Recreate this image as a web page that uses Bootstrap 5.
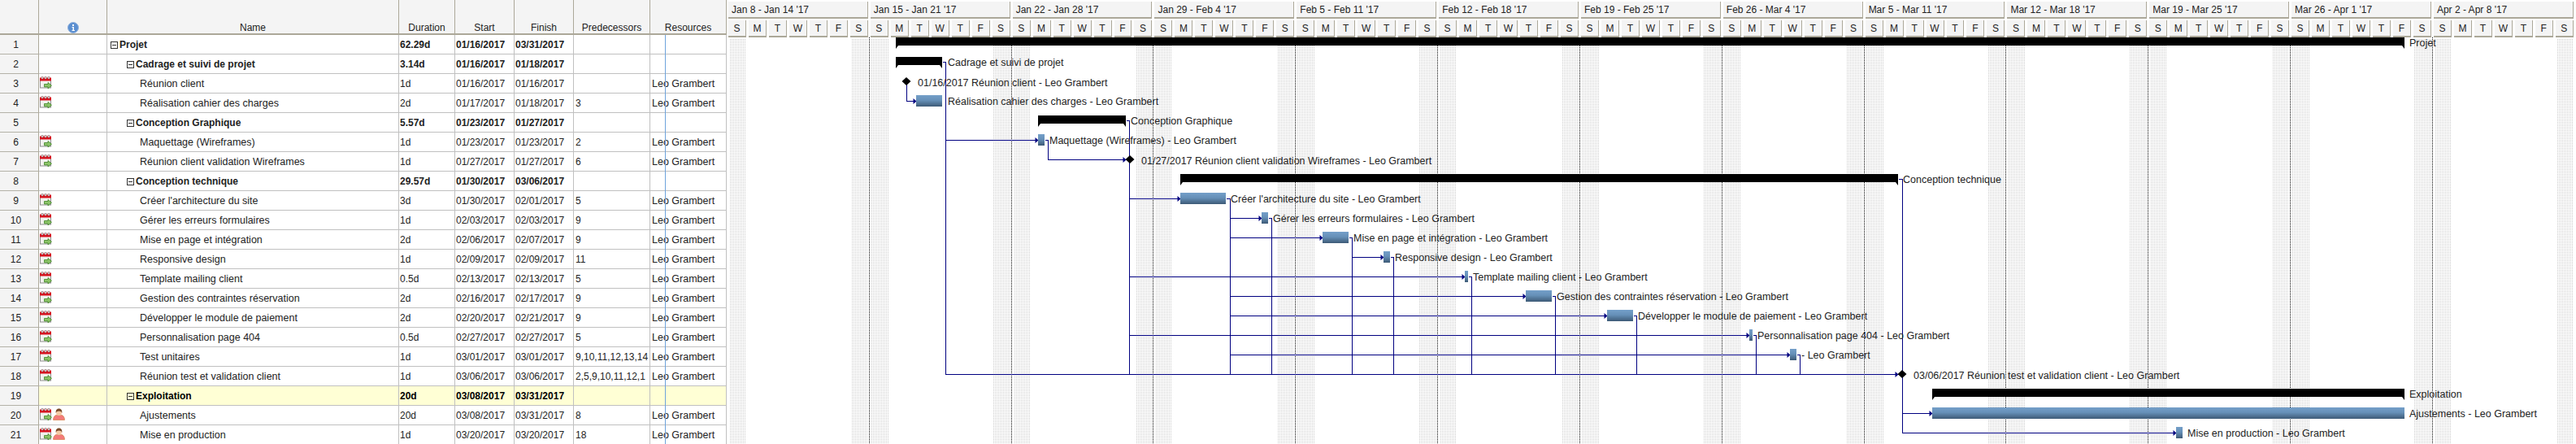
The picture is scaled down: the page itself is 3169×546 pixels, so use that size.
<!DOCTYPE html>
<html lang="fr">
<head>
    <meta charset="UTF-8">
    <meta name="viewport" content="width=device-width, initial-scale=1.0">
    <title>Projet - Gantt</title>
    <link href="https://cdn.jsdelivr.net/npm/bootstrap@5.3.0/dist/css/bootstrap.min.css" rel="stylesheet">
    <style>
        html, body {
            height: 546px;
            overflow: hidden;
            background: #fff;
        }

        body {
            font-family: "Liberation Sans", Arial, sans-serif;
            font-size: 12px;
            color: #222;
        }

        .plan-label {
            font-family: "Liberation Sans", Arial, sans-serif;
            font-size: 12.5px;
        }

        .plan-left {
            width: 894px;
            flex: none;
        }

        .plan-grid {
            width: 894px;
            table-layout: fixed;
            border-collapse: separate;
            border-spacing: 0;
            line-height: 14px;
        }

        .plan-grid col:nth-child(1) { width: 48px; }
        .plan-grid col:nth-child(2) { width: 84px; }
        .plan-grid col:nth-child(3) { width: 359px; }
        .plan-grid col:nth-child(4) { width: 69px; }
        .plan-grid col:nth-child(5) { width: 73px; }
        .plan-grid col:nth-child(6) { width: 73px; }
        .plan-grid col:nth-child(7) { width: 94px; }
        .plan-grid col:nth-child(8) { width: 94px; }

        .plan-grid th, .plan-grid td {
            padding: 0 1px;
            border: 0;
            white-space: nowrap;
            overflow: hidden;
            color: #222;
        }

        .plan-grid thead th {
            height: 43px;
            background: #f4f4f4;
            font-weight: 400;
            text-align: center;
            border-right: 1px solid #aca899;
            border-bottom: 2px solid #aca899;
        }

        .plan-grid tbody th, .plan-grid tbody td {
            height: 24px;
            border-right: 1px solid #c0c0c0;
            border-bottom: 1px solid #c0c0c0;
        }

        .plan-grid tbody th {
            background: #f4f4f4;
            font-weight: 400;
            text-align: center;
            padding-right: 9px;
            border-right-color: #aca899;
            border-bottom-color: #b4b2a8;
        }

        .plan-grid td.plan-name, .plan-grid td.plan-res {
            font-size: 12.5px;
        }

        .plan-grid tbody tr.plan-sum td {
            font-weight: 700;
            font-size: 12px;
        }

        .plan-grid tbody tr.plan-sel td {
            background: #ffffd5;
            color: #000;
        }

        .plan-grid td.plan-icons {
            padding: 0 0 2px 1px;
            line-height: 0;
        }

        .plan-icons svg {
            margin-right: 1px;
        }

        .plan-grid td.plan-pad {
            padding-left: 2px;
        }

        .plan-grid td.plan-l0 { padding-left: 4px; }
        .plan-grid td.plan-l1 { padding-left: 24px; }
        .plan-grid td.plan-l2 { padding-left: 40px; }

        .plan-minus {
            display: inline-block;
            position: relative;
            width: 9px;
            height: 9px;
            margin-right: 2px;
            border: 1px solid #333;
            vertical-align: -1px;
        }

        .plan-minus::after {
            content: "";
            position: absolute;
            left: 1px;
            right: 1px;
            top: 3px;
            height: 1px;
            background: #333;
        }

        .plan-today {
            position: absolute;
            left: 818px;
            top: 43px;
            bottom: 0;
            width: 1px;
            background: #6ea3dc;
        }

        .plan-right {
            width: 2275px;
            flex: none;
        }

        .plan-weeks {
            height: 46px;
            width: 2273px;
        }

        .plan-week {
            width: 174.83px;
            flex: none;
        }

        .plan-wk-title {
            height: 21px;
            margin: 2px 1px 2px 2px;
            padding-left: 4px;
            line-height: 20px;
            background: #f4f4f4;
            border-right: 1px solid #aca899;
            border-bottom: 2px solid #aca899;
        }

        .plan-dy {
            flex: 1 1 0;
            height: 21px;
            margin: 0 1px 0 2px;
            line-height: 20px;
            text-align: center;
            background: #f4f4f4;
            border-right: 1px solid #aca899;
            border-bottom: 2px solid #aca899;
        }

        .plan-chart {
            display: block;
        }
    </style>
</head>
<body>
    <svg width="0" height="0" class="position-absolute">
        <defs>
            <symbol id="ico-cal" viewBox="0 0 15 15">
                <rect x="0.5" y="3" width="13" height="11" fill="#f2f2ee" stroke="#8e8e8e"/>
                <rect x="0" y="1.5" width="14" height="4" fill="#d9101c"/>
                <rect x="2" y="0.5" width="2" height="2.5" fill="#e4e4e4" stroke="#8a6a6a" stroke-width="0.5"/>
                <rect x="6" y="0.5" width="2" height="2.5" fill="#e4e4e4" stroke="#8a6a6a" stroke-width="0.5"/>
                <rect x="10" y="0.5" width="2" height="2.5" fill="#e4e4e4" stroke="#8a6a6a" stroke-width="0.5"/>
                <path d="M5.5 9.5h4.500V7.500l4.500 3.700-4.500 3.700v-2H5.500z" fill="#8cc468" stroke="#3f8427" stroke-width="0.8"/>
            </symbol>
            <symbol id="ico-user" viewBox="0 0 14 14">
                <path d="M0.5 13.5c0-3.5 2-5.5 3.5-5.5h6c1.500 0 3.500 2 3.500 5.500z" fill="#f47a7a" stroke="#d98a5a" stroke-width="0.8"/>
                <circle cx="7" cy="5" r="3.300" fill="#f3c9a4"/>
                <path d="M3.500 5.500C3 2 5 0.500 7 0.500s4 1.500 3.500 5C10 3.800 8.500 3.200 7 3.200S4 3.800 3.500 5.500z" fill="#7a4a28"/>
            </symbol>
            <symbol id="ico-info" viewBox="0 0 14 14">
                <circle cx="7" cy="7" r="6.500" fill="#5b8fd0" stroke="#8fb0dc"/>
                <rect x="6" y="3" width="2" height="2" fill="#fff"/>
                <path d="M5.500 6h2.500v4h1v1H5.500v-1h1V7h-1z" fill="#fff"/>
            </symbol>
        </defs>
    </svg>

    <div class="d-flex overflow-hidden">
        <div class="plan-left position-relative">
            <table class="table mb-0 align-middle plan-grid">
                <colgroup>
                    <col><col><col><col><col><col><col><col>
                </colgroup>
                <thead>
                    <tr>
                        <th></th>
                        <th><svg width="14" height="14"><use href="#ico-info"/></svg></th>
                        <th>Name</th>
                        <th>Duration</th>
                        <th>Start</th>
                        <th>Finish</th>
                        <th>Predecessors</th>
                        <th>Resources</th>
                    </tr>
                </thead>
                <tbody id="plan-rows"></tbody>
            </table>
            <div class="plan-today"></div>
        </div>
        <div class="plan-right">
            <div class="plan-weeks d-flex" id="plan-weeks"></div>
            <svg class="plan-chart" id="plan-chart" width="2275" height="500" viewBox="894 46 2275 500" xmlns="http://www.w3.org/2000/svg"></svg>
        </div>
    </div>

    <script src="https://cdn.jsdelivr.net/npm/bootstrap@5.3.0/dist/js/bootstrap.bundle.min.js"></script>
    <script>
        const LG = 'Leo Grambert';
        // level, name, duration, start, finish, predecessors, resource, icons
        const tasks = [
            [0, 'Projet', '62.29d', '01/16/2017', '03/31/2017', '', '', ''],
            [1, 'Cadrage et suivi de projet', '3.14d', '01/16/2017', '01/18/2017', '', '', ''],
            [2, 'Réunion client', '1d', '01/16/2017', '01/16/2017', '', LG, 'c'],
            [2, 'Réalisation cahier des charges', '2d', '01/17/2017', '01/18/2017', '3', LG, 'c'],
            [1, 'Conception Graphique', '5.57d', '01/23/2017', '01/27/2017', '', '', ''],
            [2, 'Maquettage (Wireframes)', '1d', '01/23/2017', '01/23/2017', '2', LG, 'c'],
            [2, 'Réunion client validation Wireframes', '1d', '01/27/2017', '01/27/2017', '6', LG, 'c'],
            [1, 'Conception technique', '29.57d', '01/30/2017', '03/06/2017', '', '', ''],
            [2, "Créer l'architecture du site", '3d', '01/30/2017', '02/01/2017', '5', LG, 'c'],
            [2, 'Gérer les erreurs formulaires', '1d', '02/03/2017', '02/03/2017', '9', LG, 'c'],
            [2, 'Mise en page et intégration', '2d', '02/06/2017', '02/07/2017', '9', LG, 'c'],
            [2, 'Responsive design', '1d', '02/09/2017', '02/09/2017', '11', LG, 'c'],
            [2, 'Template mailing client', '0.5d', '02/13/2017', '02/13/2017', '5', LG, 'c'],
            [2, 'Gestion des contraintes réservation', '2d', '02/16/2017', '02/17/2017', '9', LG, 'c'],
            [2, 'Développer le module de paiement', '2d', '02/20/2017', '02/21/2017', '9', LG, 'c'],
            [2, 'Personnalisation page 404', '0.5d', '02/27/2017', '02/27/2017', '5', LG, 'c'],
            [2, 'Test unitaires', '1d', '03/01/2017', '03/01/2017', '9,10,11,12,13,14', LG, 'c'],
            [2, 'Réunion test et validation client', '1d', '03/06/2017', '03/06/2017', '2,5,9,10,11,12,1', LG, 'c'],
            [1, 'Exploitation', '20d', '03/08/2017', '03/31/2017', '', '', ''],
            [2, 'Ajustements', '20d', '03/08/2017', '03/31/2017', '8', LG, 'cu'],
            [2, 'Mise en production', '1d', '03/20/2017', '03/20/2017', '18', LG, 'cu']
        ];

        const icon = { c: '<svg width="15" height="15"><use href="#ico-cal"/></svg>', u: '<svg width="15" height="15"><use href="#ico-user"/></svg>' };

        document.getElementById('plan-rows').innerHTML = tasks.map((t, i) => {
            const isSum = t[0] < 2;
            const cls = (isSum ? 'plan-sum' : '') + (i === 18 ? ' plan-sel' : '');
            const icons = [...t[7]].map(k => icon[k]).join('');
            const minus = isSum ? '<span class="plan-minus"></span>' : '';
            return `<tr class="${cls}">
                <th>${i + 1}</th>
                <td class="plan-icons">${icons}</td>
                <td class="plan-name plan-l${t[0]}">${minus}${t[1]}</td>
                <td>${t[2]}</td><td>${t[3]}</td><td>${t[4]}</td>
                <td class="plan-pad">${t[5]}</td><td class="plan-pad plan-res">${t[6]}</td>
            </tr>`;
        }).join('');

        // timescale
        const weeks = ["Jan 8 - Jan 14 '17", "Jan 15 - Jan 21 '17", "Jan 22 - Jan 28 '17", "Jan 29 - Feb 4 '17", "Feb 5 - Feb 11 '17",
            "Feb 12 - Feb 18 '17", "Feb 19 - Feb 25 '17", "Feb 26 - Mar 4 '17", "Mar 5 - Mar 11 '17", "Mar 12 - Mar 18 '17",
            "Mar 19 - Mar 25 '17", "Mar 26 - Apr 1 '17", "Apr 2 - Apr 8 '17"];
        const letters = ['S', 'M', 'T', 'W', 'T', 'F', 'S'];
        document.getElementById('plan-weeks').innerHTML = weeks.map(w => `
            <div class="plan-week">
                <div class="plan-wk-title">${w}</div>
                <div class="d-flex">${letters.map(l => `<div class="plan-dy">${l}</div>`).join('')}</div>
            </div>`).join('');

        // chart, in page coordinates (see viewBox)
        const ORIGIN = 894, WEEK = 174.83, DAY = WEEK / 7;
        const ly = r => 52 + 24 * (r - 1);

        // [row, type, x1, x2, label, labelX]
        const bars = [
            [1, 's', 1102, 2958, 'Projet', 2964],
            [2, 's', 1102, 1159, 'Cadrage et suivi de projet', 1166],
            [3, 'm', 1115, 0, '01/16/2017 Réunion client - Leo Grambert', 1129],
            [4, 't', 1127, 1159, 'Réalisation cahier des charges - Leo Grambert', 1166],
            [5, 's', 1277, 1385, 'Conception Graphique', 1391],
            [6, 't', 1277, 1285, 'Maquettage (Wireframes) - Leo Grambert', 1291],
            [7, 'm', 1390, 0, '01/27/2017 Réunion client validation Wireframes - Leo Grambert', 1404],
            [8, 's', 1452, 2335, 'Conception technique', 2341],
            [9, 't', 1452, 1508, "Créer l'architecture du site - Leo Grambert", 1514],
            [10, 't', 1552, 1560, 'Gérer les erreurs formulaires - Leo Grambert', 1566],
            [11, 't', 1627, 1659, 'Mise en page et intégration - Leo Grambert', 1665],
            [12, 't', 1702, 1710, 'Responsive design - Leo Grambert', 1716],
            [13, 't', 1802, 1806, 'Template mailing client - Leo Grambert', 1812],
            [14, 't', 1877, 1909, 'Gestion des contraintes réservation - Leo Grambert', 1915],
            [15, 't', 1977, 2009, 'Développer le module de paiement - Leo Grambert', 2015],
            [16, 't', 2152, 2156, 'Personnalisation page 404 - Leo Grambert', 2162],
            [17, 't', 2202, 2210, '- Leo Grambert', 2216],
            [18, 'm', 2340, 0, '03/06/2017 Réunion test et validation client - Leo Grambert', 2354],
            [19, 's', 2377, 2958, 'Exploitation', 2964],
            [20, 't', 2377, 2958, 'Ajustements - Leo Grambert', 2964],
            [21, 't', 2677, 2685, 'Mise en production - Leo Grambert', 2691]
        ];

        const links = [
            'M1159 76H1163V460H2335', 'M1163 172H1273',
            'M1115 100V124H1123',
            'M1385 148H1389V460', 'M1389 244H1448', 'M1389 340H1798', 'M1389 412H2148',
            'M1285 172H1289V196H1381',
            'M1508 244H1513V460', 'M1513 268H1548', 'M1513 292H1623', 'M1513 364H1873', 'M1513 388H1973', 'M1513 436H2198',
            'M1560 268H1564V460',
            'M1659 292H1663V460', 'M1663 316H1698',
            'M1710 316H1714V460', 'M1806 340H1810V460', 'M1909 364H1913V460', 'M2009 388H2013V460',
            'M2156 412H2160V460', 'M2210 436H2214V460',
            'M2335 220H2340V532H2673', 'M2340 508H2373'
        ];
        const arrows = [[2335, 460], [1277, 172], [1127, 124], [1452, 244], [1802, 340], [2152, 412], [1385, 196], [1552, 268],
            [1627, 292], [1877, 364], [1977, 388], [2202, 436], [1702, 316], [2677, 532], [2377, 508]];

        let svg = `<defs>
            <pattern id="plan-dots" width="2" height="2" patternUnits="userSpaceOnUse"><rect width="1" height="1" fill="#c8c8c8"/></pattern>
            <linearGradient id="plan-bar" x1="0" y1="0" x2="0" y2="1">
                <stop offset="0" stop-color="#749fc9"/><stop offset="0.45" stop-color="#6690b8"/><stop offset="1" stop-color="#3d5a76"/>
            </linearGradient></defs>`;

        // weekend shading and week separators
        for (let w = 0; w < 13; w++) {
            const x0 = ORIGIN + w * WEEK;
            svg += `<rect x="${Math.round(x0 + 3)}" y="47" width="21" height="499" fill="url(#plan-dots)"/>`;
            svg += `<rect x="${Math.round(x0 + 6 * DAY + 3)}" y="47" width="21" height="499" fill="url(#plan-dots)"/>`;
            if (w) svg += `<path d="M${Math.round(x0) + 0.5} 46V546" stroke="#000" stroke-dasharray="1 1"/>`;
        }

        svg += `<g transform="translate(.5 .5)" fill="none" stroke="#000080" shape-rendering="crispEdges">${links.map(d => `<path d="${d}"/>`).join('')}</g>`;
        svg += arrows.map(a => `<polygon points="${a[0] + 0.5},${a[1] + 0.5} ${a[0] - 3.5},${a[1] - 3} ${a[0] - 3.5},${a[1] + 4}" fill="#000080"/>`).join('');

        bars.forEach(b => {
            const [r, type, x1, x2, label, lx] = b;
            const c = ly(r);
            if (type === 's') {
                const y = 46 + 24 * (r - 1);
                svg += `<polygon points="${x1},${y} ${x2},${y} ${x2},${y + 14} ${x2 - 3},${y + 10} ${x1 + 3},${y + 10} ${x1},${y + 14}" fill="#000"/>`;
            } else if (type === 't') {
                svg += `<rect x="${x1}" y="${c - 7}" width="${x2 - x1}" height="14" fill="url(#plan-bar)"/>`;
            } else {
                svg += `<polygon points="${x1},${c - 5} ${x1 + 5.5},${c} ${x1},${c + 5} ${x1 - 5.5},${c}" fill="#000"/>`;
            }
            const by = c + (type === 'm' ? 6 : 5);
            svg += `<text class="plan-label" x="${lx}" y="${by}" fill="#222">${label}</text>`;
        });

        document.getElementById('plan-chart').innerHTML = svg;
    </script>
</body>
</html>
